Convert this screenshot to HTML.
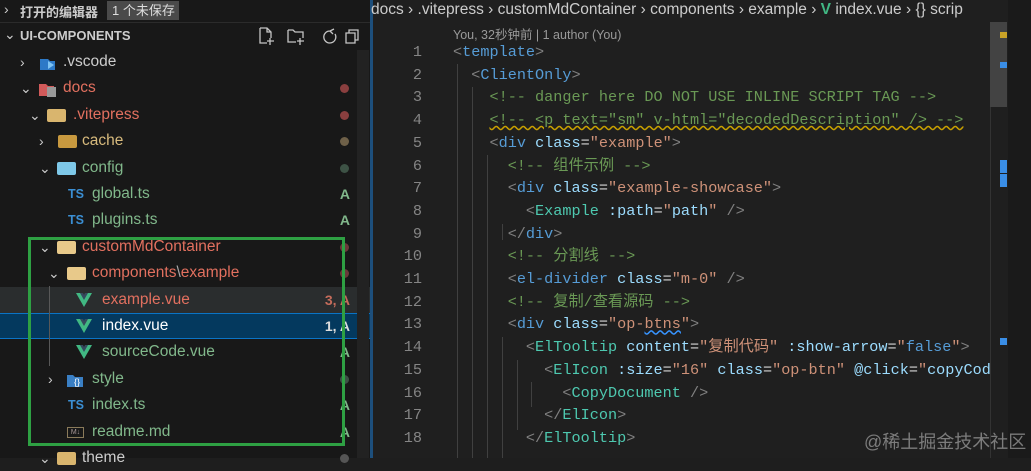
<!DOCTYPE html>
<html><head><meta charset="utf-8"><style>
*{margin:0;padding:0;box-sizing:border-box}
body{width:1031px;height:458px;overflow:hidden;background:#1e1e1e;position:relative;font-family:"Liberation Sans","Noto Sans CJK SC",sans-serif;color:#ccc}
.side{position:absolute;left:0;top:0;width:370px;height:458px;background:#181818}
.abs{position:absolute;white-space:nowrap}
.row{position:absolute;left:0;width:370px;height:26px;font-size:15.5px;line-height:26px;white-space:nowrap}
.row .c{position:absolute;top:0;color:#ccc;font-size:14px}
.row .t{position:absolute;top:0}
.dot{position:absolute;right:21px;top:9px;width:9px;height:9px;border-radius:50%}
.badge{position:absolute;right:20px;top:0;font-weight:bold;font-size:14px}
.fold{position:absolute;width:19px;height:13px;top:7px;border-radius:2px}
.ts{position:absolute;top:0;color:#3b8fd4;font-weight:bold;font-size:12.5px}
.vue{position:absolute;top:5px}
.ed{position:absolute;left:373px;top:0;width:658px;height:458px;background:#1f1f1f}
.code{position:absolute;left:453px;font-family:"Liberation Mono","Noto Sans CJK SC",monospace;font-size:15.2px;white-space:pre;line-height:22.7px}
.ln{position:absolute;left:380px;width:42px;text-align:right;font-family:"Liberation Mono",monospace;font-size:15.2px;color:#858585;line-height:22.7px}
.p{color:#808080}.tg{color:#569cd6}.cm{color:#6a9955}.at{color:#9cdcfe}.s{color:#ce9178}.cp{color:#4ec9b0}.w{color:#d4d4d4}
.g{position:absolute;width:1px;background:#404040}
</style></head><body>
<div class="side">
 <div class="abs" style="left:0;top:0;width:370px;height:22px;background:#181818"></div>
 <div class="abs" style="left:4px;top:1px;font-size:14px;color:#ccc">›</div>
 <div class="abs" style="left:20px;top:2px;font-size:13px;font-weight:bold;color:#ccc">打开的编辑器</div>
 <div class="abs" style="left:107px;top:1px;width:72px;height:19px;background:#4a4a4a;font-size:13px;color:#ddd;padding-left:5px;line-height:19px">1 个未保存</div>
 <div class="abs" style="left:0;top:22px;width:370px;height:1px;background:#2b2b2b"></div>
 <div class="abs" style="left:4px;top:26px;font-size:14px;color:#ccc">⌄</div>
 <div class="abs" style="left:20px;top:28px;font-size:13px;font-weight:bold;color:#ccc">UI-COMPONENTS</div>
 <svg class="abs" style="left:258px;top:27px" width="105" height="18" fill="none" stroke="#c5c5c5" stroke-width="1.3">
  <path d="M2 1h7l4 4v6M2 1v15h7M9 1v4h4M12 11v7M9 14h7"/>
  <path d="M30 3h5l2 2h8v6M30 3v12h8M42 11v7M39 14h7"/>
  <path d="M72 4a6 6 0 1 0 5 3M72 4l4-2M72 4l3 3"/>
  <path d="M88 6h9v10h-9zM91 6V3h9v10h-3"/>
 </svg>
 <div class="row" style="top:49px"><span class="c" style="left:20px">›</span>
  <svg class="abs" style="left:38px;top:6px" width="18" height="16"><path d="M2 4h8l2 2h5v9H2z" fill="#2d79c7"/><path d="M10 6l6 4-6 4z" fill="#7ec3f3"/></svg>
  <span class="t" style="left:63px;color:#ccc">.vscode</span></div>
 <div class="row" style="top:75px"><span class="c" style="left:20px">⌄</span>
  <svg class="abs" style="left:38px;top:6px" width="20" height="16"><path d="M1 3h7l2 2h6v10H1z" fill="#d15a5a"/><rect x="9" y="6" width="9" height="10" fill="#999"/></svg>
  <span class="t" style="left:63px;color:#e2705f">docs</span><span class="dot" style="background:#8a3f3f"></span></div>
 <div class="row" style="top:102px"><span class="c" style="left:29px">⌄</span>
  <span class="fold" style="left:47px;background:#d9b56e"></span>
  <span class="t" style="left:73px;color:#e2705f">.vitepress</span><span class="dot" style="background:#8a3f3f"></span></div>
 <div class="row" style="top:128px"><span class="c" style="left:39px">›</span>
  <span class="fold" style="left:58px;background:#c8993f"></span>
  <span class="t" style="left:82px;color:#d7ba7d">cache</span><span class="dot" style="background:#6e6048"></span></div>
 <div class="row" style="top:155px"><span class="c" style="left:39px">⌄</span>
  <span class="fold" style="left:57px;background:#7ec8e8"></span>
  <span class="t" style="left:82px;color:#81b88b">config</span><span class="dot" style="background:#3d5245"></span></div>
 <div class="row" style="top:181px"><span class="ts" style="left:68px">TS</span>
  <span class="t" style="left:92px;color:#81b88b">global.ts</span><span class="badge" style="color:#81b88b">A</span></div>
 <div class="row" style="top:207px"><span class="ts" style="left:68px">TS</span>
  <span class="t" style="left:92px;color:#81b88b">plugins.ts</span><span class="badge" style="color:#81b88b">A</span></div>
 <div class="row" style="top:234px"><span class="c" style="left:39px">⌄</span>
  <span class="fold" style="left:57px;background:#e8c98a"></span>
  <span class="t" style="left:82px;color:#e2705f">customMdContainer</span><span class="dot" style="background:#6b3a3a"></span></div>
 <div class="row" style="top:260px"><span class="c" style="left:48px">⌄</span>
  <span class="fold" style="left:67px;background:#e8c98a"></span>
  <span class="t" style="left:92px;color:#e2705f">components<span style="color:#aaa">\</span>example</span><span class="dot" style="background:#6b3a3a"></span></div>
 <div class="row" style="top:287px;background:#2a2d2e"><svg class="vue" style="left:75px" width="18" height="16"><path d="M1 1h5l3 6 3-6h5L9 15z" fill="#41b883"/><path d="M5 1h3l1 2 1-2h3L9 8z" fill="#35495e"/></svg>
  <span class="t" style="left:102px;color:#e2705f">example.vue</span><span class="badge" style="color:#c56c5b">3, A</span></div>
 <div class="row" style="top:313px;background:#04395e;border-top:1px solid #0a74c6;border-bottom:1px solid #0a74c6"><svg class="vue" style="left:75px;top:4px" width="18" height="16"><path d="M1 1h5l3 6 3-6h5L9 15z" fill="#41b883"/><path d="M5 1h3l1 2 1-2h3L9 8z" fill="#35495e"/></svg>
  <span class="t" style="left:102px;top:-1px;color:#fff">index.vue</span><span class="badge" style="color:#ddd;top:-1px">1, A</span></div>
 <div class="row" style="top:339px"><svg class="vue" style="left:75px" width="18" height="16"><path d="M1 1h5l3 6 3-6h5L9 15z" fill="#41b883"/><path d="M5 1h3l1 2 1-2h3L9 8z" fill="#35495e"/></svg>
  <span class="t" style="left:102px;color:#81b88b">sourceCode.vue</span><span class="badge" style="color:#81b88b">A</span></div>
 <div class="row" style="top:366px"><span class="c" style="left:48px">›</span>
  <svg class="abs" style="left:66px;top:6px" width="18" height="16"><path d="M1 3h6l2 2h8v10H1z" fill="#3a7fc4"/><text x="8" y="13" font-size="9" fill="#fff">{}</text></svg>
  <span class="t" style="left:92px;color:#81b88b">style</span><span class="dot" style="background:#3d5245"></span></div>
 <div class="row" style="top:392px"><span class="ts" style="left:68px">TS</span>
  <span class="t" style="left:92px;color:#81b88b">index.ts</span><span class="badge" style="color:#81b88b">A</span></div>
 <div class="row" style="top:419px"><span class="abs" style="left:67px;top:8px;width:17px;height:11px;border:1px solid #8a7a5a;font-size:7px;line-height:9px;color:#a99;text-align:center">M↓</span>
  <span class="t" style="left:92px;color:#81b88b">readme.md</span><span class="badge" style="color:#81b88b">A</span></div>
 <div class="row" style="top:445px"><span class="c" style="left:39px">⌄</span><span class="fold" style="left:57px;background:#d9b56e"></span>
  <span class="t" style="left:82px;color:#ccc">theme</span><span class="dot" style="background:#555"></span></div>
 <div class="abs" style="left:49px;top:286px;width:1px;height:80px;background:#585858"></div>
 <div class="abs" style="left:28px;top:237px;width:317px;height:209px;border:3px solid #2ea043"></div>
 <div class="abs" style="left:357px;top:50px;width:12px;height:408px;background:#222"></div>
</div>
<div class="abs" style="left:370px;top:0;width:3px;height:458px;background:#1d4f7c"></div>
<div class="ed"></div>
<div class="abs" style="left:371px;top:0;font-size:15.5px;color:#ccc;line-height:20px">docs › .vitepress › customMdContainer › components › example › <span style="color:#41b883;font-weight:bold">V</span> index.vue › {} scrip</div>
<div class="abs" style="left:453px;top:24px;font-size:12.5px;color:#999">You, 32秒钟前 | 1 author (You)</div>
<div class="ln" style="top:41px">1<br>2<br>3<br>4<br>5<br>6<br>7<br>8<br>9<br>10<br>11<br>12<br>13<br>14<br>15<br>16<br>17<br>18</div>
<div class="g" style="left:457px;top:64px;height:394px"></div>
<div class="g" style="left:472px;top:87px;height:371px"></div>
<div class="g" style="left:487px;top:155px;height:303px"></div>
<div class="g" style="left:502px;top:224px;height:16px"></div>
<div class="g" style="left:502px;top:337px;height:121px"></div>
<div class="g" style="left:517px;top:360px;height:70px"></div>
<div class="g" style="left:531px;top:382px;height:25px"></div>
<div class="code" style="top:41px"><span class="p">&lt;</span><span class="tg">template</span><span class="p">&gt;</span>
  <span class="p">&lt;</span><span class="tg">ClientOnly</span><span class="p">&gt;</span>
    <span class="cm">&lt;!-- danger here DO NOT USE INLINE SCRIPT TAG --&gt;</span>
    <span class="cm" style="text-decoration:underline wavy #c8a000">&lt;!-- &lt;p text="sm" v-html="decodedDescription" /&gt; --&gt;</span>
    <span class="p">&lt;</span><span class="tg">div</span> <span class="at">class</span><span class="w">=</span><span class="s">"example"</span><span class="p">&gt;</span>
      <span class="cm">&lt;!-- 组件示例 --&gt;</span>
      <span class="p">&lt;</span><span class="tg">div</span> <span class="at">class</span><span class="w">=</span><span class="s">"example-showcase"</span><span class="p">&gt;</span>
        <span class="p">&lt;</span><span class="cp">Example</span> <span class="at">:path</span><span class="w">=</span><span class="s">"</span><span class="at">path</span><span class="s">"</span> <span class="p">/&gt;</span>
      <span class="p">&lt;/</span><span class="tg">div</span><span class="p">&gt;</span>
      <span class="cm">&lt;!-- 分割线 --&gt;</span>
      <span class="p">&lt;</span><span class="tg">el-divider</span> <span class="at">class</span><span class="w">=</span><span class="s">"m-0"</span> <span class="p">/&gt;</span>
      <span class="cm">&lt;!-- 复制/查看源码 --&gt;</span>
      <span class="p">&lt;</span><span class="tg">div</span> <span class="at">class</span><span class="w">=</span><span class="s">"op-<span style="text-decoration:underline wavy #3794ff">btns</span>"</span><span class="p">&gt;</span>
        <span class="p">&lt;</span><span class="cp">ElTooltip</span> <span class="at">content</span><span class="w">=</span><span class="s">"复制代码"</span> <span class="at">:show-arrow</span><span class="w">=</span><span class="s">"</span><span class="tg">false</span><span class="s">"</span><span class="p">&gt;</span>
          <span class="p">&lt;</span><span class="cp">ElIcon</span> <span class="at">:size</span><span class="w">=</span><span class="s">"16"</span> <span class="at">class</span><span class="w">=</span><span class="s">"op-btn"</span> <span class="at">@click</span><span class="w">=</span><span class="s">"</span><span class="at">copyCode</span>
            <span class="p">&lt;</span><span class="cp">CopyDocument</span> <span class="p">/&gt;</span>
          <span class="p">&lt;/</span><span class="cp">ElIcon</span><span class="p">&gt;</span>
        <span class="p">&lt;/</span><span class="cp">ElTooltip</span><span class="p">&gt;</span></div>
<div class="abs" style="left:990px;top:22px;width:18px;height:436px;background:#1f1f1f;border-left:1px solid #333"></div>
<div class="abs" style="left:990px;top:22px;width:17px;height:85px;background:#434343"></div>
<div class="abs" style="left:1000px;top:32px;width:7px;height:6px;background:#c9a227"></div>
<div class="abs" style="left:1000px;top:62px;width:7px;height:6px;background:#3a8ee6"></div>
<div class="abs" style="left:1000px;top:160px;width:7px;height:13px;background:#3a8ee6"></div>
<div class="abs" style="left:1000px;top:174px;width:7px;height:13px;background:#3a8ee6"></div>
<div class="abs" style="left:1000px;top:338px;width:7px;height:7px;background:#3a8ee6"></div>
<div class="abs" style="left:1008px;top:0;width:23px;height:458px;background:#1a1a1a"></div>
<div class="abs" style="left:864px;top:428px;font-size:18px;color:rgba(200,200,200,0.55)">@稀土掘金技术社区</div>
</body></html>
